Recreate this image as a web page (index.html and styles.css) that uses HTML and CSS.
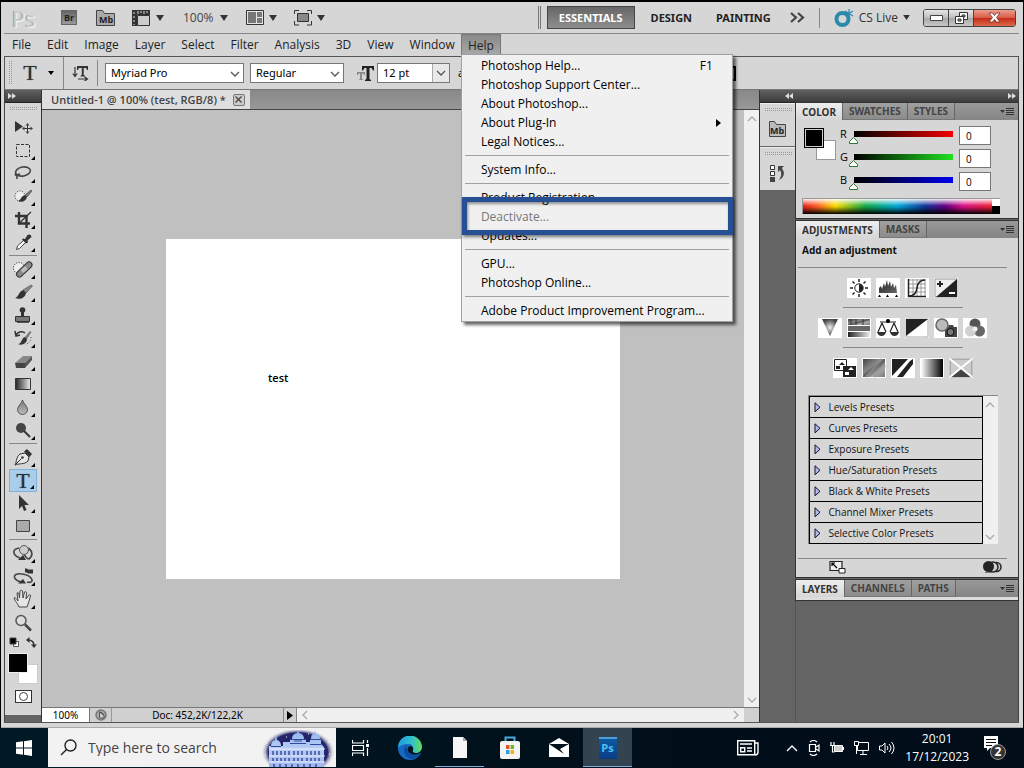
FILE: index.html
```html
<!DOCTYPE html>
<html lang="en">
<head>
<meta charset="utf-8">
<title>Untitled-1 @ 100%</title>
<link rel="stylesheet" href="styles.css">
</head>
<body>
<svg class="defs" aria-hidden="true">
  <defs>
    <linearGradient id="gDark" x1="0" y1="0" x2="1" y2="1"><stop offset="0" stop-color="#222"/><stop offset="1" stop-color="#666"/></linearGradient>
    <linearGradient id="gFade"><stop offset="0" stop-color="#222"/><stop offset="1" stop-color="#eee"/></linearGradient>
    <linearGradient id="gFadeR"><stop offset="0" stop-color="#fff"/><stop offset="1" stop-color="#000"/></linearGradient>
    <linearGradient id="gGrey" x1="0" y1="0" x2="0" y2="1"><stop offset="0" stop-color="#777"/><stop offset="1" stop-color="#bbb"/></linearGradient>
    <linearGradient id="gMetal" x1="0" y1="0" x2="1" y2="1"><stop offset="0" stop-color="#444"/><stop offset=".4" stop-color="#888"/><stop offset=".5" stop-color="#555"/><stop offset=".7" stop-color="#aaa"/><stop offset="1" stop-color="#777"/></linearGradient>
    <radialGradient id="gCone"><stop offset="0" stop-color="#eee"/><stop offset="1" stop-color="#444"/></radialGradient>
    <linearGradient id="gEdge" x1="0" y1="0" x2="1" y2="0"><stop offset="0" stop-color="#1b9de2"/><stop offset=".6" stop-color="#35c1c8"/><stop offset="1" stop-color="#65dc4e"/></linearGradient>
    <linearGradient id="gCastle" x1="0" y1="0" x2="0" y2="1"><stop offset="0" stop-color="#8fb4ee"/><stop offset=".5" stop-color="#b9cdf6"/><stop offset="1" stop-color="#9db5ec"/></linearGradient>
    <radialGradient id="gNight"><stop offset="0" stop-color="#171a5e"/><stop offset=".8" stop-color="#25276a"/><stop offset="1" stop-color="#f2f2f2" stop-opacity="0"/></radialGradient>
    <symbol id="down" viewBox="0 0 8 6"><path d="M0 0h8L4 6z" fill="#333"/></symbol>
    <symbol id="chev" viewBox="0 0 10 6"><path d="M1 1l4 4 4-4" fill="none" stroke="currentColor" stroke-width="1.3"/></symbol>
    <symbol id="panelmenu" viewBox="0 0 14 8"><path d="M0 2h5L2.500 5z" fill="#333"/><path d="M6 .5h8M6 2.500h8M6 4.500h8M6 6.500h8" stroke="#333"/></symbol>
    <symbol id="ff" viewBox="0 0 8 6"><path d="M0 0l4 3-4 3zM4 0l4 3-4 3z" fill="#ddd"/></symbol>
  </defs>
</svg>

<div class="window">
  <header class="appbar">
    <div class="logo">Ps</div>
    <button class="bridge" aria-label="Launch Bridge">Br</button>
    <button class="mini" aria-label="Launch Mini Bridge"><svg width="19" height="17"><path d="M.5 16.500V1.500h6l2 3h10v12z" fill="#aaa" stroke="#444"/><text x="3" y="14" class="mbtext">Mb</text></svg></button>
    <button class="tool-drop extras" aria-label="View extras"><svg width="18" height="16"><path d="M0 0h18v5H5v11H0z" fill="#333"/><path d="M2 2v2M2 6v2M2 10v2M2 14v1M6 1v3M9 1v2M12 1v3M15 1v2" stroke="#ddd"/><path d="M5.500 5.500h12v10h-12z" fill="#ccc" stroke="#333"/></svg><svg class="dn"><use href="#down"/></svg></button>
    <button class="tool-drop zoomlevel">100% <svg class="dn"><use href="#down"/></svg></button>
    <button class="tool-drop" aria-label="Arrange documents"><svg width="18" height="16"><path d="M.5.5h17v14H.5z" fill="#e5e5e5" stroke="#333"/><path d="M2 2h8v11H2zM11 2h5v5h-5zM11 8h5v5h-5z" fill="#777"/></svg><svg class="dn"><use href="#down"/></svg></button>
    <button class="tool-drop" aria-label="Screen mode"><svg width="18" height="16"><path d="M.5 4V.5H5M13 .5h4.500V4M17.500 11v4H13M5 15H.5v-4" fill="none" stroke="#333"/><path d="M3.500 3.500h11v8h-11z" fill="#888" stroke="#333"/></svg><svg class="dn"><use href="#down"/></svg></button>
    <nav class="workspaces">
      <button class="ws active">ESSENTIALS</button>
      <button class="ws">DESIGN</button>
      <button class="ws">PAINTING</button>
      <button class="more" aria-label="More workspaces"><svg width="15" height="11"><path d="M1 1l5 4.500L1 10M8 1l5 4.500L8 10" fill="none" stroke="#444" stroke-width="2.200"/></svg></button>
      <button class="cslive"><svg width="20" height="18"><circle cx="8.500" cy="10" r="6" fill="none" stroke="#2a8aac" stroke-width="4"/><path d="M15 0v9M11 2l8 5M19 2l-8 5" stroke="#2a8aac" stroke-width="1.200"/></svg>CS Live<svg class="dn"><use href="#down"/></svg></button>
    </nav>
    <div class="winbtns">
      <button aria-label="Minimize"><svg width="13" height="6"><path d="M.5.5h12v5H.5z" fill="#fff" stroke="#444"/></svg></button>
      <button aria-label="Restore"><svg width="13" height="12"><path d="M4.500.5h8v7h-8z" fill="#fff" stroke="#333"/><path d="M7 3h3v2H7z" fill="#aaa" stroke="#333"/><path d="M.5 4.500h8v7h-8z" fill="#fff" stroke="#333"/><path d="M3 7h3v2H3z" fill="#999" stroke="#333"/></svg></button>
      <button class="close" aria-label="Close"><svg width="13" height="11"><path d="M1 1h3.500l2 2.500 2-2.500H12L8.500 5.500 12 10H8.500l-2-2.500-2 2.500H1l3.500-4.500z" fill="#fff" stroke="#633" stroke-width=".8"/></svg></button>
    </div>
  </header>

  <nav class="menubar">
    <button>File</button><button>Edit</button><button>Image</button><button>Layer</button><button>Select</button><button>Filter</button><button>Analysis</button><button>3D</button><button>View</button><button>Window</button>
    <div class="helpwrap">
      <button class="open">Help</button>
      <div class="menu" role="menu">
        <button role="menuitem">Photoshop Help...<kbd>F1</kbd></button>
        <button role="menuitem">Photoshop Support Center...</button>
        <button role="menuitem">About Photoshop...</button>
        <button role="menuitem">About Plug-In<svg class="sub" width="5" height="8"><path d="M0 0l5 4-5 4z"/></svg></button>
        <button role="menuitem">Legal Notices...</button>
        <hr>
        <button role="menuitem">System Info...</button>
        <hr>
        <button role="menuitem">Product Registration...</button>
        <button role="menuitem" class="deact" disabled>Deactivate...</button>
        <button role="menuitem">Updates...</button>
        <hr>
        <button role="menuitem">GPU...</button>
        <button role="menuitem">Photoshop Online...</button>
        <hr>
        <button role="menuitem">Adobe Product Improvement Program...</button>
      </div>
    </div>
  </nav>

  <div class="options">
    <span class="vgrip"></span>
    <button class="preset" aria-label="Tool preset"><span class="serif">T</span><svg width="6" height="4"><path d="M0 0h6L3 4z"/></svg></button>
    <button class="orient" aria-label="Text orientation"><svg width="18" height="16"><path d="M3 2v9M.8 8.500L3 11.500l2.200-3M6 14h9M12.500 11.800L15.500 14l-3 2" fill="none" stroke="#333" stroke-width="1.200"/><path d="M5 1h11v4h-1l-1-2h-2.300v7l1.300.8v.7H8.500v-.7l1.300-.8V3H7L6 5H5z" fill="#333"/></svg></button>
    <span class="field family"><select aria-label="Font family"><option>Myriad Pro</option></select><svg class="cv"><use href="#chev"/></svg></span>
    <span class="field style"><select aria-label="Font style"><option>Regular</option></select><svg class="cv"><use href="#chev"/></svg></span>
    <svg class="tt" width="17" height="15"><path d="M5 0h12v4.500h-1L14.500 2h-2v11l1.500 1v1H8v-1l1.500-1V2h-2L6 4.500H5z" fill="#222"/><path d="M0 6h8v3H7l-.7-1.500H5V13l1 .5V14H2v-.5l1-.5V7.500H1.500L1 9H0z" fill="#888"/></svg>
    <span class="combo"><input aria-label="Font size" value="12 pt"><button aria-label="Font size list"><svg class="cv"><use href="#chev"/></svg></button></span>
    <span class="aa">a</span>
    <svg class="charpanel" width="16" height="15"><path d="M1 1h14v13H1z" fill="#aaa" stroke="#000" stroke-width="2"/><path d="M4 5h9M4 8h9M4 11h9" stroke="#444"/></svg>
  </div>

  <main class="work">
    <aside class="tools">
      <div class="strip"><svg class="ff"><use href="#ff"/></svg></div>
      <div class="toolbody">
        <span class="grip"></span>
        <div class="group">
          <button aria-label="Move"><svg width="26" height="23"><path d="M5 5v11l8-5.500z" fill="#333"/><path d="M17.500 8.500v8M13.500 12.500h8" stroke="#333"/><path d="M17.500 7l2 2.500h-4zM17.500 18l2-2.500h-4zM12 12.500l2.500-2v4zM23 12.500l-2.500-2v4z" fill="#444"/></svg></button>
          <button class="fly" aria-label="Marquee"><svg width="26" height="23"><path d="M6.500 5.500h13v12h-13z" fill="none" stroke="#333" stroke-dasharray="3 1.500"/></svg></button>
          <button class="fly" aria-label="Lasso"><svg width="26" height="23"><ellipse cx="13" cy="9.500" rx="7.500" ry="4.500" transform="rotate(-10 13 9.500)" fill="none" stroke="#444" stroke-width="1.600"/><path d="M6 11c-2 2 1 4 3 2s-3-1-2 4" fill="none" stroke="#444" stroke-width="1.500"/></svg></button>
          <button class="fly" aria-label="Quick selection"><svg width="26" height="23"><circle cx="10" cy="11" r="5" fill="#eee" stroke="#222" stroke-dasharray="1 1.500"/><path d="M15 10l6-5 1 1-5 6z" fill="#777" stroke="#444" stroke-width=".6"/><path d="M8 16c3-1 3-5 7-6l2 2c-1 4-5 6-9 4z" fill="#333"/></svg></button>
          <button class="fly" aria-label="Crop"><svg width="26" height="23"><path d="M9 4v11.500H20M5 8h11.500V20" fill="none" stroke="#333" stroke-width="2.400"/><path d="M9 15.500L21 4" stroke="#333" stroke-width="1.200"/></svg></button>
          <button class="fly" aria-label="Eyedropper"><svg width="26" height="23"><path d="M6.500 18.500l1-3.500 7-6.500 2 2-7 7z" fill="#fff" stroke="#444"/><path d="M13 7.500l2 .5 2.500-4q3.500-1.500 4 2l-4 3.500.5 2-2 1-4-4z" fill="#333"/></svg></button>
        </div>
        <div class="group">
          <button class="fly" aria-label="Healing brush"><svg width="26" height="23"><circle cx="9" cy="10" r="5.500" fill="#eee" stroke="#222" stroke-dasharray="1 1.500"/><path d="M9.500 16L19 7" stroke="#333" stroke-width="7" stroke-linecap="round"/><path d="M9.500 16L19 7" stroke="#888" stroke-width="5" stroke-linecap="round"/><path d="M12 13.500L16.500 9.500" stroke="#bbb" stroke-width="4"/></svg></button>
          <button class="fly" aria-label="Brush"><svg width="26" height="23"><path d="M13 9l8-5 1.500 1-6.500 7z" fill="#888" stroke="#555" stroke-width=".7"/><path d="M5 17c4-1 3-6 8-8l3 3c-1 5-6 7-11 5z" fill="#333"/></svg></button>
          <button class="fly" aria-label="Clone stamp"><svg width="26" height="23"><circle cx="12.500" cy="6" r="2.800" fill="#333"/><path d="M11 7h3v5h-3z" fill="#333"/><path d="M5.500 12.500h14v5h-14z" fill="#777" stroke="#333"/><path d="M7 18.500h12" stroke="#555"/></svg></button>
          <button class="fly" aria-label="History brush"><svg width="26" height="23"><path d="M15 10l5-6 1.500 1-4.500 7z" fill="#777"/><path d="M8 17c4 0 3-6 7-7l2 2c0 4-5 7-9 5z" fill="#333"/><path d="M6 8c2-4 7-4 9-2M5 4l1 5 4-1" fill="none" stroke="#333" stroke-width="1.500"/><path d="M21 10c0 4-2 7-6 7" fill="none" stroke="#555" stroke-dasharray="1 1.500"/></svg></button>
          <button class="fly" aria-label="Eraser"><svg width="26" height="23"><path d="M5 13l8-7h9l-7 7z" fill="#888"/><path d="M5 13h10v5H6z" fill="#444"/><path d="M15 13l7-7v4l-7 8z" fill="#555"/></svg></button>
          <button class="fly" aria-label="Gradient"><svg width="26" height="23"><path d="M5.500 5.500h15v11h-15z" fill="url(#gFade)" stroke="#333"/></svg></button>
          <button class="fly" aria-label="Blur"><svg width="26" height="23"><path d="M12.500 4c1 4 5 6 5 9.500a5 5 0 0 1-10 0C7.500 10 11.500 8 12.500 4z" fill="url(#gGrey)" stroke="#555"/></svg></button>
          <button class="fly" aria-label="Dodge"><svg width="26" height="23"><circle cx="11" cy="9" r="5" fill="#444"/><path d="M14 12l6 6" stroke="#333" stroke-width="2"/></svg></button>
        </div>
        <div class="group">
          <button class="fly" aria-label="Pen"><svg width="26" height="23"><path d="M5 19c2-4 1-8 5-11l5-1 4 4-1 4c-4 4-9 2-13 4z" fill="#e5e5e5" stroke="#333"/><path d="M5.500 18.500l6-6" stroke="#333"/><circle cx="12.500" cy="11.500" r="1.200" fill="#333"/><path d="M14 5.500L17 3l5 5-2.500 3z" fill="#333"/></svg></button>
          <button class="fly sel" aria-label="Type"><span class="serif">T</span></button>
          <button class="fly" aria-label="Path selection"><svg width="26" height="23"><path d="M9 3v14l3-3 2 5 2.500-1-2-5H19z" fill="#333"/></svg></button>
          <button class="fly" aria-label="Rectangle"><svg width="26" height="23"><path d="M6.500 5.500h13v11h-13z" fill="#aaa" stroke="#444"/></svg></button>
        </div>
        <div class="group">
          <button class="fly" aria-label="3D rotate"><svg width="26" height="23"><path d="M9 6c-7 1-7 7 1 10M18 6c5 3 5 8 1 11-3 0-3-3-5-4" fill="none" stroke="#444" stroke-width="1.600"/><circle cx="14" cy="8" r="4.500" fill="#ccc" stroke="#555"/><path d="M8 18h8l-3-5z" fill="#333"/></svg></button>
          <button class="fly" aria-label="3D camera"><svg width="26" height="23"><path d="M11 17C4 15 3 11 6 9.500S18 9 21 13s-1 5-4 4" fill="none" stroke="#444" stroke-width="1.600"/><path d="M15 3.500h2l1 1h5v4h-5l-1-1h-2zM8 18.500h8l-3-4.500z" fill="#333"/></svg></button>
          <button class="fly" aria-label="Hand"><svg width="26" height="23"><path d="M9 19c-1-3-4-6-5-9 1-1 3 1 4 3L7 5c1-1.500 2 0 2.500 5L10 3c1-1 2-1 2.500 0l.5 7 1.500-6c1-1 2 0 2 1L16 11l3-4c1-.5 2 0 1.500 1-1 4-2 7-3.500 11z" fill="#e5e5e5" stroke="#444"/></svg></button>
          <button aria-label="Zoom"><svg width="26" height="23"><circle cx="11" cy="9.500" r="5" fill="#ddd" stroke="#555" stroke-width="1.500"/><path d="M15 13.500l6 6" stroke="#444" stroke-width="2.500"/></svg></button>
        </div>
        <div class="swapline"><svg width="11" height="11"><path d="M4.500 4.500h5v5h-5z" fill="#fff" stroke="#555"/><path d="M1 1h6v6H1z" stroke="#444"/></svg><svg width="11" height="11"><path d="M2 3q6 0 6 6" fill="none" stroke="#333" stroke-width="1.600"/><path d="M0 3l3.500-3v6zM8 11L5 7.500h6z" fill="#333"/></svg></div>
        <div class="swatches"><span class="bg"></span><span class="fg"></span></div>
        <button class="mask" aria-label="Quick mask"><svg width="11" height="11"><circle cx="5.500" cy="5.500" r="4" fill="#fff" stroke="#444"/></svg></button>
      </div>
    </aside>

    <section class="doc">
      <div class="doctabs"><div class="doctab">Untitled-1 @ 100% (test, RGB/8) * <button aria-label="Close document"><svg width="7" height="7"><path d="M.5.5l6 6M6.500.5l-6 6" stroke="#444" stroke-width="1.300"/></svg></button></div></div>
      <div class="view">
        <div class="canvas"><div class="paper">test</div></div>
        <div class="vscroll"><svg class="cv up"><use href="#chev"/></svg><svg class="cv"><use href="#chev"/></svg></div>
      </div>
      <div class="status">
        <input aria-label="Zoom" value="100%">
        <button class="share" aria-label="Share"><svg width="12" height="12"><circle cx="6" cy="6" r="5" fill="#aaa" stroke="#777" stroke-width="1.500"/><path d="M4.500 3v6h4.500V6.500zM4.500 3Q8 3 9 6.500" fill="#ccc" stroke="#555"/></svg></button>
        <span class="size">Doc: 452,2K/122,2K</span>
        <button class="play" aria-label="Status options"><svg width="6" height="9"><path d="M0 0l6 4.500L0 9z"/></svg></button>
        <div class="hscroll"><svg class="cv l"><use href="#chev"/></svg><svg class="cv r"><use href="#chev"/></svg></div>
        <span class="corner"></span>
      </div>
    </section>

    <aside class="dock">
      <div class="strip"><svg class="ff back"><use href="#ff"/></svg><svg class="ff"><use href="#ff"/></svg></div>
      <div class="dockbody">
        <div class="icons">
          <div class="iconbox"><span class="grip"></span><button aria-label="Mini Bridge"><svg width="19" height="18"><path d="M1.500 16.500V1.500h5l2 3h9v12z" fill="#bbb" stroke="#444"/><text x="2" y="14" class="mbtext">Mb</text></svg></button></div>
          <div class="iconbox"><span class="grip"></span><button aria-label="History"><svg width="19" height="18"><path d="M2.500 1.500h4v4h-4zM2.500 7.500h4v4h-4z" fill="#fff" stroke="#333"/><path d="M2 13h5v5H2z" fill="#444"/><path d="M10 2h6l-2 2q5 8-3 12 4-6 1-10l-2 2z" fill="#444"/></svg></button></div>
        </div>
        <div class="panels">
          <section class="panel">
            <div class="tabs"><button class="on">COLOR</button><button>SWATCHES</button><button>STYLES</button><svg class="pm"><use href="#panelmenu"/></svg></div>
            <div class="color">
              <div class="colortop">
                <div class="pair"><span class="bg"></span><span class="fg"></span></div>
                <div class="sliders">
                  <div class="slider red"><label for="r">R</label><input type="range" id="r" min="0" max="255" value="0"><input class="num" aria-label="Red value" value="0"></div>
                  <div class="slider green"><label for="g">G</label><input type="range" id="g" min="0" max="255" value="0"><input class="num" aria-label="Green value" value="0"></div>
                  <div class="slider blue"><label for="b">B</label><input type="range" id="b" min="0" max="255" value="0"><input class="num" aria-label="Blue value" value="0"></div>
                </div>
              </div>
              <div class="ramp"><span class="hues"></span><span class="bw"></span></div>
            </div>
          </section>
          <section class="panel">
            <div class="tabs"><button class="on">ADJUSTMENTS</button><button>MASKS</button><svg class="pm"><use href="#panelmenu"/></svg></div>
            <div class="adjust">
              <h2>Add an adjustment</h2>
              <div class="adjrow">
                <button aria-label="Brightness/Contrast"><svg width="24" height="20"><path d="M12 1v3M12 16v3M3 10h3M18 10h3M5.500 3.500l2 2M16.500 14.500l2 2M18.500 3.500l-2 2M7.500 14.500l-2 2" stroke="#222" stroke-width="1.500"/><circle cx="12" cy="10" r="4.200" fill="#fff" stroke="#222"/><path d="M12 6a4 4 0 0 1 0 8z" fill="#222"/></svg></button>
                <button aria-label="Levels"><svg width="24" height="20"><path d="M3 15v-5l2-2 1 3 2-6 1 4 2-7 1 6 2-5 1 6 2-4 1 5 2-3 1 8z" fill="url(#gDark)"/><path d="M2 19l1.500-2.500L5 19zM10 19l1.500-2.500L13 19zM19 19l1.500-2.500L22 19z"/></svg></button>
                <button aria-label="Curves"><svg width="24" height="20"><path d="M4 2h17M4 6h17M4 10h17M4 14h17M8 1v17M12 1v17M16 1v17M20 1v17" stroke="#999"/><path d="M3.500 1v17.500H21" fill="none" stroke="#222" stroke-width="1.500"/><path d="M4 18q7 0 8-8t8-8" fill="none" stroke="#222" stroke-width="1.600"/></svg></button>
                <button aria-label="Exposure"><svg width="24" height="20"><path d="M1 1h22v18H1z" fill="#eee" stroke="#999"/><path d="M2 19L23 1v18z" fill="#222"/><path d="M3 6h6M6 3v6" stroke="#222" stroke-width="2"/><path d="M15 15h6" stroke="#fff" stroke-width="2"/></svg></button>
              </div>
              <div class="adjrow">
                <button aria-label="Vibrance"><svg width="24" height="20"><path d="M4 1h16l-8 17z" fill="url(#gCone)"/></svg></button>
                <button aria-label="Hue/Saturation"><svg width="24" height="20"><path d="M1 1h22v6H1z" fill="url(#gMetal)"/><path d="M4 1v6M9 1v6M16 1v6" stroke="#333" stroke-width="2" opacity=".5"/><path d="M1 8h22v5H1z" fill="#666"/><path d="M1 14h22v5H1z" fill="url(#gFade)"/><path d="M1 7.500h22M1 13.500h22" stroke="#fff"/></svg></button>
                <button aria-label="Color Balance"><svg width="24" height="20"><path d="M12 1v4M4 4h16M6 5L2 14M6 5l4 9M18 5l-4 9M18 5l4 9" fill="none" stroke="#222" stroke-width="1.200"/><path d="M1 14h9q-1 4-4.500 4T1 14zM14 14h9q-1 4-4.500 4T14 14z" fill="#333"/><circle cx="12" cy="3" r="2"/></svg></button>
                <button aria-label="Black and White"><svg width="24" height="20"><path d="M1 1h22v18H1z" fill="#fff" stroke="#aaa"/><path d="M1 1h22L1 18z" fill="#222"/></svg></button>
                <button aria-label="Photo Filter"><svg width="24" height="20"><path d="M11 9h3l1-2h4l1 2h3v10H11z" fill="#444"/><circle cx="16.500" cy="14" r="3.500" fill="#777" stroke="#111"/><circle cx="8" cy="7" r="6" fill="#bbb" stroke="#666" stroke-width="1.500"/></svg></button>
                <button aria-label="Channel Mixer"><svg width="24" height="20"><circle cx="12" cy="6" r="5.500" fill="#555"/><circle cx="16.500" cy="13" r="5.500" fill="#666"/><circle cx="7.500" cy="13" r="5.500" fill="#ccc" opacity=".9"/><circle cx="12" cy="11" r="2.500" fill="#eee"/></svg></button>
              </div>
              <div class="adjrow">
                <button aria-label="Invert"><svg width="24" height="20"><path d="M1.500 1.500h12v11h-12z" fill="#fff" stroke="#222"/><path d="M3 8h4v3H3zM6 7l3-3 3 3z" fill="#222"/><path d="M10 8h13v11H10z" fill="#222"/><path d="M12 14h4v3h-4zM15 12l3-3 3 3z" fill="#fff"/></svg></button>
                <button aria-label="Posterize"><svg width="24" height="20"><path d="M1 1h22v18H1z" fill="url(#gMetal)"/><path d="M4 19L20 1M12 19L23 7" stroke="#999" stroke-width="3" opacity=".6"/></svg></button>
                <button aria-label="Threshold"><svg width="24" height="20"><path d="M1 1h22v18H1z" fill="#fff"/><path d="M1 1h16L1 18zM6 19L19 3l3-2v5L12 19z" fill="#222"/></svg></button>
                <button aria-label="Gradient Map"><svg width="24" height="20"><path d="M1 1h22v18H1z" fill="url(#gFadeR)"/></svg></button>
                <button aria-label="Selective Color"><svg width="24" height="20"><path d="M1 1h22v18H1z" fill="#ccc" stroke="#888"/><path d="M1 19l11-9 11 9z" fill="#444"/><path d="M1 1l22 18M23 1L1 19" stroke="#fff" stroke-width="2"/></svg></button>
              </div>
              <div class="listbox">
                <div class="rows">
                  <button><svg class="tri"><path d="M1 .8v9l5-4.500z"/></svg>Levels Presets</button>
                  <button><svg class="tri"><path d="M1 .8v9l5-4.500z"/></svg>Curves Presets</button>
                  <button><svg class="tri"><path d="M1 .8v9l5-4.500z"/></svg>Exposure Presets</button>
                  <button><svg class="tri"><path d="M1 .8v9l5-4.500z"/></svg>Hue/Saturation Presets</button>
                  <button><svg class="tri"><path d="M1 .8v9l5-4.500z"/></svg>Black &amp; White Presets</button>
                  <button><svg class="tri"><path d="M1 .8v9l5-4.500z"/></svg>Channel Mixer Presets</button>
                  <button><svg class="tri"><path d="M1 .8v9l5-4.500z"/></svg>Selective Color Presets</button>
                </div>
                <div class="vscroll"><svg class="cv up"><use href="#chev"/></svg><svg class="cv"><use href="#chev"/></svg></div>
              </div>
              <div class="adjfoot">
                <button aria-label="Expanded view"><svg width="17" height="14"><path d="M1 1.500h12v9H1z" fill="#eee" stroke="#222" stroke-width="1.200"/><path d="M3 3l5 5M3 6V3h3" fill="none" stroke="#000" stroke-width="1.200"/><path d="M10 8.500h6v4.500h-6z" fill="#fff" stroke="#222"/></svg></button>
                <button aria-label="Clip to layer"><svg width="20" height="14"><circle cx="14.500" cy="7" r="4.500" fill="#ccc" stroke="#222" stroke-width="1.500"/><circle cx="11" cy="7" r="5" fill="#ccc" stroke="#222" stroke-width="1.500"/><circle cx="6.500" cy="6.500" r="5.500" fill="#222"/><path d="M3 12.500h7" stroke="#777"/></svg></button>
              </div>
            </div>
          </section>
          <section class="panel">
            <div class="tabs"><button class="on">LAYERS</button><button>CHANNELS</button><button>PATHS</button><svg class="pm"><use href="#panelmenu"/></svg></div>
            <div class="sliver"></div>
          </section>
        </div>
      </div>
    </aside>
  </main>
</div>

<footer class="taskbar">
  <button class="start" aria-label="Start"><svg width="16" height="16"><path d="M0 2.300L7 1.300V7.500H0zM8 1.200L16 0v7.500H8zM0 8.500h7v6.200l-7-1zM8 8.500h8V16l-8-1.200z" fill="#fff"/></svg></button>
  <div class="search">
    <svg width="17" height="17"><circle cx="10.500" cy="6.500" r="5.500" fill="none" stroke="#222" stroke-width="1.400"/><path d="M6.500 10.500L1 16" stroke="#222" stroke-width="1.400"/></svg>
    <input aria-label="Search" placeholder="Type here to search">
    <svg class="castle" width="74" height="37" viewBox="0 0 74 37">
      <ellipse cx="37" cy="22" rx="37" ry="24" fill="url(#gNight)"/>
      <path d="M8 37V16h2q0-5 4-6l1-6 1 6q4 1 4 6h2v-4h7V9h2q0-5 5-6l1-3 1 3q5 1 5 6h2v3h4v-3h1q0-5 3-5l1-4 1 4q4 0 4 5h1v5l3 3v21z" fill="url(#gCastle)"/>
      <path d="M8 19h56M8 26h56M8 32h56" stroke="#eaf1ff"/>
      <path d="M12 21v4M16 21v4M20 21v4M24 21v4M28 21v4M33 21v4M37 21v4M41 21v4M46 21v4M50 21v4M54 21v4M58 21v4M12 28v3M16 28v3M20 28v3M24 28v3M28 28v3M33 28v3M37 28v3M41 28v3M46 28v3M50 28v3M54 28v3M58 28v3M13 34v3M19 34v3M25 34v3M31 34v3M37 34v3M43 34v3M49 34v3M55 34v3" stroke="#3a4f9f" stroke-width="1.500"/>
      <path d="M10 16.500h10M29 9.500h16M29 13.500h16M49 9.500h11M49 14.500h11M33 11h8" fill="none" stroke="#31499a"/>
      <path d="M5 13h1M25 7h1M67 12h1M47 4h1M68 24h1M4 25h1" stroke="#fff"/>
    </svg>
  </div>
  <nav class="apps">
    <button aria-label="Task view"><svg width="17" height="16"><path d="M.5 0v3h11V0M.5 16v-3h11v3M.5 5.500h11v5H.5zM15.500 0v3M15.500 8v8" fill="none" stroke="#fff" stroke-width="1.200"/><path d="M14 4h3v3h-3z" fill="#fff"/></svg></button>
    <button aria-label="Edge"><svg width="24" height="24"><circle cx="12" cy="12" r="12" fill="#1769c4"/><path d="M0 12A12 12 0 0 1 24 11c0 4-3 6-6 6-3 0-4-1-3-3 1-3-1-6-5-6-5 0-9 2-10 4z" fill="url(#gEdge)"/><path d="M9 9c-5 3-4 11 4 14 5 0 8-3 9-6-3 2-7 2-9 0-4-2-5-5-4-8z" fill="#0c4fa0"/><path d="M13 10c-3 0-4 3-3 5 2 4 8 5 14 1v-5c0 4-3 6-6 6s-4-1-3-3c.5-2 0-3-2-4z" fill="#02131e"/></svg></button>
    <button class="run" aria-label="Document"><svg width="14" height="21"><path d="M0 0h10l4 4v17H0z" fill="#f6f6f6"/><path d="M10 0v4h4z" fill="#aaa"/></svg></button>
    <button aria-label="Store"><svg width="20" height="23"><path d="M5.500 6V1.500h9V6" fill="none" stroke="#49a9dd" stroke-width="2"/><rect y="5" width="20" height="18" rx="2" fill="#f3f3f3"/><path d="M6 9h3.500v4H6z" fill="#e5532d"/><path d="M10.500 9H14v4h-3.500z" fill="#6fb52c"/><path d="M6 14h3.500v4H6z" fill="#2a9fe0"/><path d="M10.500 14H14v4h-3.500z" fill="#f3b41b"/></svg></button>
    <button aria-label="Mail"><svg width="20" height="19"><path d="M0 6l10-6 10 6v13H0z" fill="#fff"/><path d="M0 6h20L11 11l4 5z" fill="#04121c"/></svg></button>
    <button class="cur" aria-label="Photoshop"><span class="psicon">Ps</span></button>
  </nav>
  <div class="tray">
    <button class="news" aria-label="News"><svg width="22" height="16"><path d="M.7.7h17v14H.7zM18 3h3v9q0 3-3 3" fill="none" stroke="#fff" stroke-width="1.400"/><path d="M3 4h12M10 8h5M10 11h5" stroke="#fff" stroke-width="1.400"/><path d="M3.700 7.700h4v4h-4z" fill="none" stroke="#fff" stroke-width="1.400"/></svg></button>
    <button aria-label="Show hidden icons"><svg width="12" height="8"><path d="M1 7l5-5 5 5" fill="none" stroke="#fff" stroke-width="1.400"/></svg></button>
    <button aria-label="Meet now"><svg width="12" height="16"><path d="M1.500 4.500h6v7h-6zM8 7l3-2v6L8 9M2 2q3.500-3 7 0M2 14q3.500 3 7 0" fill="none" stroke="#fff" stroke-width="1.200"/></svg></button>
    <button aria-label="Battery"><svg width="14" height="12"><path d="M4.500 3.500h8v6h-8z" fill="#ccc" stroke="#fff"/><path d="M13.500 5v3M1 0v3M4 0v3M0 3.500h5M2.500 3v7h2" fill="none" stroke="#fff" stroke-width="1.200"/></svg></button>
    <button aria-label="Network"><svg width="15" height="14"><path d="M5 1.500h9.500v8h-11V5M9 10v3M6 13.500h7M.5.500h4v4h-4zM2.500 5v8" fill="none" stroke="#fff"/></svg></button>
    <button aria-label="Volume"><svg width="16" height="14"><path d="M.5 5h2.500l3-3v10L3 9H.5zM8 5q2 2 0 4M10 3q4 4 0 8M12.500 1q5 6 0 12" fill="none" stroke="#fff"/></svg></button>
    <button class="clock"><span>20:01</span><span>17/12/2023</span></button>
    <button class="notif" aria-label="Notifications"><svg width="24" height="26"><path d="M1 1h14v12H7l-3 3v-3H1z" fill="#fff"/><path d="M3 4.500h10M3 7.500h10M3 10.500h6" stroke="#111"/><circle cx="15" cy="17" r="7.500" fill="#333" stroke="#999"/><text x="15" y="21" class="badge">2</text></svg></button>
  </div>
</footer>
</body>
</html>
```

FILE: styles.css
```css
* { box-sizing: border-box; }
html, body { height: 100%; }
body {
  margin: 0; display: flex; flex-direction: column; overflow: hidden;
  background: #000; color: #222;
  font: 12px/16px "Open Sans", "Noto Sans", sans-serif;
}
button, input, select { font: inherit; color: inherit; margin: 0; padding: 0; border: 0; border-radius: 0; background: none; }
button { display: flex; align-items: center; justify-content: center; white-space: nowrap; }
svg { flex: none; display: block; }
.defs { position: absolute; width: 0; height: 0; }
.dn { width: 8px; height: 6px; }
.cv { width: 10px; height: 6px; color: #555; }
.ff { width: 8px; height: 6px; }
.ff.back { transform: rotate(180deg); }
.serif { font-family: "Liberation Serif", serif; font-size: 22px; line-height: 22px; color: #333; text-shadow: 0 0 1px #555; }
.mbtext { font: bold 9px "Open Sans", sans-serif; fill: #222; }

.window {
  flex: 1; min-height: 0; display: flex; flex-direction: column;
  margin: 2px 1px 0; padding: 0 4px 4px 3px; background: #d6d6d6; border-bottom: 1px solid #aaa;
}

/* Application bar */
.appbar { display: flex; align-items: center; height: 32px; padding: 0 3px 0 8px; border-bottom: 1px solid #888; }
.logo { width: 49px; font-size: 22px; line-height: 28px; color: #d0d0d0; text-shadow: -1px 0 #999, 1px 1px #f4f4f4; }
.bridge { width: 16px; height: 15px; margin-right: 19px; background: linear-gradient(#666, #999); border: 1px solid #666; font-size: 9px; font-weight: bold; }
.mini { margin-right: 17px; }
.tool-drop { gap: 5px; margin-right: 17px; }
.extras { gap: 6px; margin-right: 19px; }
.zoomlevel { gap: 6px; margin-right: 18px; color: #444; }
.workspaces { display: flex; align-items: center; margin-left: auto; padding-left: 6px; border-left: 3px double #777; }
.ws { height: 23px; padding: 0 8px; font: bold 11px/16px "Noto Sans", sans-serif; margin-right: 8px; }
.ws.active { padding: 0 11px; color: #fff; background: linear-gradient(#666, #8e8e8e); border: 1px solid #444; }
.more { padding: 0 14px 0 3px; height: 20px; border-right: 1px solid #888; margin-right: 14px; }
.cslive { gap: 5px; margin-right: 13px; color: #333; }
.cslive .dn { width: 7px; height: 5px; }
.winbtns { display: flex; height: 18px; border: 1px solid #444; border-radius: 3px; overflow: hidden; }
.winbtns button { width: 25px; background: linear-gradient(#e6e6e6, #bdbdbd 50%, #a6a6a6 50%, #c8c8c8); border-right: 1px solid #444; }
.winbtns .close { width: 41px; border: 0; background: linear-gradient(#ee9c8c, #d75a44 50%, #c42a15 50%, #dc6a4a); }

/* Menus */
.menubar { display: flex; height: 22px; }
.menubar > button { padding: 0 8px; }
.helpwrap { position: relative; display: flex; margin-left: -2px; }
.menubar .open { background: linear-gradient(#8a8a8a, #aaa); border: 1px solid #777; border-bottom: 0; padding: 0 6px; }
.menu {
  position: absolute; z-index: 5; top: 20px; left: 0; width: 272px; padding: 1px 3px;
  background: #f0f0f0; border: 1px solid #a0a0a0; box-shadow: 3px 3px 3px rgba(0,0,0,.6); color: #000;
}
.menu button { position: relative; width: 100%; height: 19px; padding: 0 16px; justify-content: flex-start; color: #000; }
.menu hr { height: 9px; margin: 0; border: 0; background: linear-gradient(#a0a0a0, #a0a0a0) center / 100% 1px no-repeat; }
.menu kbd { margin-left: auto; font: inherit; }
.menu .sub { margin-left: auto; margin-right: -8px; }
.menu .deact { color: #777; }
.menu .deact::after {
  content: ""; position: absolute; z-index: 2; inset: -10px -4px -9px -3px; border: 5px solid #264f94;
  box-shadow: 1px 2px 3px rgba(0,0,0,.5), inset 1px 2px 3px rgba(0,0,0,.4);
}

/* Options bar */
.options { display: flex; align-items: center; height: 34px; border: 1px solid #555; border-bottom-color: #777; padding-left: 3px; color: #000; font: 11px/16px "Noto Sans", sans-serif; }
.vgrip { width: 4px; height: 24px; background: conic-gradient(#999 25%, transparent 0) 0 0 / 2px 2px; }
.preset { width: 52px; height: 32px; gap: 11px; padding-left: 2px; border-right: 1px solid #888; }
.orient { width: 34px; height: 26px; border-right: 1px solid #888; margin-right: 7px; }
.field { position: relative; display: flex; height: 20px; margin-right: 6px; background: #fff; border: 1px solid #777; }
.field select { appearance: none; width: 100%; padding: 0 20px 0 5px; }
.field .cv { position: absolute; right: 3px; top: 7px; pointer-events: none; }
.family { width: 139px; }
.style { width: 94px; }
.tt { margin: 0 3px 0 7px; }
.combo { display: flex; height: 20px; width: 73px; background: #fff; border: 1px solid #777; }
.combo input { flex: 1; width: 0; padding-left: 5px; }
.combo button { width: 17px; background: #e8e8e8; border-left: 1px solid #aaa; }
.aa { margin-left: 8px; }
.charpanel { margin-left: 256px; }

/* Work area */
.work { flex: 1; min-height: 0; display: flex; background: #646464; border-bottom: 1px solid #555; border-right: 1px solid #444; }
.strip { display: flex; align-items: center; height: 13px; background: linear-gradient(#606060, #3c3c3c); border-bottom: 1px solid #222; }
.grip { display: block; width: 28px; height: 4px; background: conic-gradient(#999 25%, transparent 0) 0 0 / 2px 2px; }

.tools { width: 38px; border-right: 1px solid #333; border-left: 1px solid #444; }
.tools .strip { padding-left: 3px; }
.toolbody { display: flex; flex-direction: column; align-items: center; padding: 4px 4px 12px; background: #d6d6d6; }
.toolbody > .grip { margin-bottom: 5px; }
.group { display: flex; flex-direction: column; padding-bottom: 1px; margin-bottom: 2px; border-bottom: 1px solid #888; }
.group:nth-of-type(4) { padding: 0; border: 0; }
.group button { position: relative; width: 28px; height: 23px; }
.group .fly::after { content: ""; position: absolute; right: 2px; bottom: 2px; border: 2px solid; border-color: transparent #000 #000 transparent; }
.group .sel { background: #a9cdea; border: 1px solid #7fb2da; }
.group .sel .serif { color: #234; }
.swapline { display: flex; justify-content: space-between; width: 28px; padding: 1px 0 5px; }
.swatches { display: grid; width: 30px; height: 31px; margin-bottom: 6px; }
.swatches span { grid-area: 1 / 1; width: 20px; height: 20px; }
.swatches .bg { background: #fff; border: 1px solid #ccc; place-self: end; }
.swatches .fg { background: #000; border: 1px solid #eee; }
.mask { width: 17px; height: 13px; background: #fff; border: 1px solid #333; }

.doc { flex: 1; min-width: 0; display: flex; flex-direction: column; border-right: 1px solid #333; }
.doctabs { display: flex; height: 20px; background: linear-gradient(#888, #989898); border-bottom: 1px solid #444; }
.doctab { display: flex; align-items: center; gap: 7px; padding: 0 5px 0 9px; background: #dedede; font-weight: 600; font-size: 11px; color: #444; white-space: nowrap; }
.doctab button { width: 12px; height: 12px; background: #ccc; border: 1px solid #777; border-radius: 2px; }
.view { flex: 1; min-height: 0; display: flex; background: #c0c0c0; }
.canvas { flex: 1; min-width: 0; display: flex; align-items: center; justify-content: center; }
.paper { width: 454px; height: 340px; padding: 131px 102px; background: #fff; color: #000; font-size: 11px; font-weight: 600; }
.vscroll { display: flex; flex-direction: column; justify-content: space-between; align-items: center; width: 15px; padding: 6px 0 4px; background: #f0f0f0; }
.vscroll .cv, .hscroll .cv { color: #aaa; }
.up { transform: rotate(180deg); }
.l { transform: rotate(90deg); }
.r { transform: rotate(-90deg); }
.status { display: flex; height: 15px; background: #d0d0d0; border-top: 1px solid #777; color: #000; font: 10px/14px "Noto Sans", sans-serif; }
.status input { width: 48px; background: #fff; text-align: center; border-right: 1px solid #777; }
.share { width: 22px; border-right: 1px solid #999; }
.size { width: 171px; text-align: center; }
.play { width: 14px; border: solid #888; border-width: 0 1px; }
.hscroll { flex: 1; display: flex; align-items: center; justify-content: space-between; padding: 0 3px; background: #f0f0f0; }
.corner { width: 15px; }

/* Dock */
.dock { width: 258px; display: flex; flex-direction: column; }
.dock .strip { justify-content: space-between; padding: 0 2px 0 25px; }
.dockbody { flex: 1; min-height: 0; display: flex; }
.icons { width: 36px; border-right: 1px solid #555; }
.iconbox { display: flex; flex-direction: column; align-items: center; gap: 8px; height: 43px; margin-bottom: 1px; padding-top: 4px; background: #d6d6d6; border-top: 1px solid #eee; }
.panels { flex: 1; display: flex; flex-direction: column; gap: 3px; }
.panel { background: #d6d6d6; outline: 1px solid #333; }
.tabs { display: flex; height: 17px; background: linear-gradient(#999, #858585); }
.tabs button { padding: 0 6px; border-right: 1px solid #666; border-bottom: 1px solid #777; font: bold 10px/14px "Noto Sans", sans-serif; color: #444; background: linear-gradient(#a0a0a0, #8c8c8c); }
.tabs .on { background: linear-gradient(#eee, #d6d6d6); border-bottom: 0; color: #333; }
.pm { width: 14px; height: 8px; margin: 5px 4px 0 auto; }
.color { padding: 6px 6px 4px; }
.colortop { display: flex; }
.pair { display: grid; width: 34px; height: 32px; margin-top: 2px; }
.pair span { grid-area: 1 / 1; width: 20px; height: 20px; }
.pair .bg { background: #fff; border: 1px solid #999; place-self: end; }
.pair .fg { background: #000; border: 1px solid #000; box-shadow: inset 0 0 0 1px #ccc; margin-left: 2px; }
.sliders { display: flex; flex-direction: column; gap: 4px; }
.slider { display: flex; height: 19px; font-size: 11px; line-height: 15px; color: #000; }
.slider label { width: 9px; margin-left: 4px; }
.slider input[type=range] { appearance: none; width: 109px; height: 19px; }
.slider input::-webkit-slider-runnable-track { height: 19px; background: linear-gradient(90deg, #000, var(--c)) 5px 5px / 99px 6px no-repeat; }
.slider input::-webkit-slider-thumb { appearance: none; width: 9px; height: 7px; margin-top: 11px; background: url("data:image/svg+xml,%3Csvg xmlns='http://www.w3.org/2000/svg' width='9' height='7'%3E%3Cpath d='M4.500.500l4 4v2h-8v-2z' fill='white' stroke='%23267a35'/%3E%3C/svg%3E"); }
.red { --c: #f20000; }
.green { --c: #20e020; }
.blue { --c: #0000ee; }
.num { width: 32px; height: 19px; margin-left: 1px; padding-left: 6px; background: #fff; border: 1px solid #777; font-size: 10px; }
.ramp { display: flex; height: 16px; width: 198px; margin-top: 7px; border: 1px solid #999; border-width: 1px 0 0 1px; }
.hues { flex: 1; background: linear-gradient(rgba(255,255,255,.9), transparent 45%, rgba(0,0,0,.1) 55%, #000), linear-gradient(90deg, #e22, #f62 8%, #fd0 17%, #1a4 33%, #0ad 50%, #139 65%, #608 75%, #d18 85%, #e23); }
.bw { width: 8px; background: linear-gradient(#fff 50%, #000 50%); }

.adjust { display: flex; flex-direction: column; align-items: center; padding: 4px 11px 0 2px; }
.adjust h2 { align-self: stretch; margin: 0 0 10px; padding: 0 4px 9px; border-bottom: 1px solid #888; font: bold 10px/16px "Noto Sans", sans-serif; color: #111; }
.adjrow { display: flex; justify-content: center; gap: 5px; min-width: 120px; padding-bottom: 20px; }
.adjrow:not(:nth-of-type(3)) { background: linear-gradient(#888, #888) 50% calc(100% - 10px) / 120px 1px no-repeat; }
.adjrow:nth-of-type(3) { padding-bottom: 17px; }
.adjrow button { background: #fff; }
.listbox { display: flex; width: 190px; border: 1px solid #888; border-right: 0; border-bottom: 0; }
.rows { flex: 1; border: 1px solid #000; border-bottom: 0; }
.rows button { width: 100%; height: 21px; padding-left: 4px; gap: 8px; justify-content: flex-start; border-bottom: 1px solid #000; color: #111; font: 10px/20px "Open Sans", sans-serif; }
.tri { width: 7px; height: 11px; fill: #b8b8e8; stroke: #113; }
.adjfoot { display: flex; justify-content: space-between; align-self: stretch; margin-top: 14px; padding: 1px 5px 3px 31px; border-top: 1px solid #888; }
.sliver { height: 3px; background: #ddd; }

/* Taskbar */
.taskbar { display: flex; height: 40px; padding-bottom: 1px; background: linear-gradient(90deg, #001b26, #010f1a 60%, #020d18); color: #fff; }
.start { width: 48px; }
.search { display: flex; align-items: center; width: 288px; padding-left: 12px; background: #f2f2f2; }
.search > svg:first-child { width: 17px; margin-right: 11px; }
.search input { flex: 1; width: 0; font-size: 14px; color: #333; }
.search input::placeholder { color: #444; opacity: 1; }
.castle { align-self: flex-end; margin-right: 1px; }
.apps { display: flex; }
.apps button { width: 49px; }
.apps .run { box-shadow: inset 0 -1px #7fb0dd; margin: 0 1px; }
.apps .cur { background: #344350; box-shadow: inset 0 -1px #7fb0dd; }
.psicon { width: 18px; height: 22px; background: linear-gradient(#0d5a9e, #0a3c86); border-top: 2px solid #4a9de0; color: #4cc3f5; font-size: 11px; line-height: 18px; font-weight: bold; }
.tray { display: flex; align-items: center; margin-left: auto; padding-right: 17px; gap: 10px; }
.news { margin-right: 17px; }
.clock { flex-direction: column; font-size: 12px; line-height: 18px; }
.notif { padding-left: 4px; }
.badge { font: bold 12px "Open Sans", sans-serif; fill: #fff; text-anchor: middle; }
```
